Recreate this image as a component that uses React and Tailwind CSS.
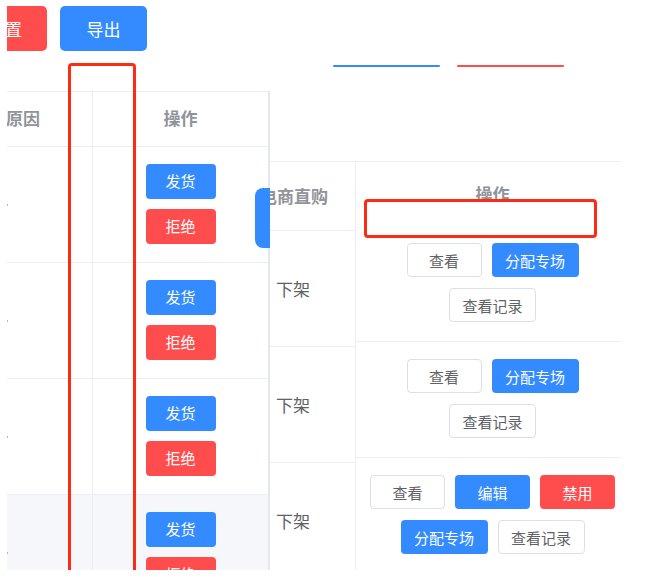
import React from "react";

const BLUE = "bg-[#338bff]";
const RED = "bg-[#ff4d4d]";

function Btn({ kind = "default", w, children }) {
  const base =
    "h-[34px] rounded-[4px] flex items-center justify-center text-[15px] leading-none shrink-0";
  const style =
    kind === "primary"
      ? `${base} bg-[#338bff] text-white`
      : kind === "danger"
      ? `${base} bg-[#ff4d4d] text-white`
      : `${base} bg-white border border-[#dcdfe6] text-[#606266]`;
  return <div className={`${style} ${w}`}>{children}</div>;
}

function LeftRow({ gray }) {
  return (
    <div className={`flex h-[116px] border-b border-[#ebeef5] shrink-0 ${gray ? "bg-[#f5f7fa]" : ""}`}>
      <div className="w-[86px] border-r border-[#ebeef5] flex items-center">
        <div className="w-[1px] h-[2px] bg-[#8fc0ff]" />
      </div>
      <div className="flex-1 flex flex-col items-center justify-center gap-[10px] pb-[2px]">
        <div className="w-[70px] h-[35px] rounded-[4px] bg-[#338bff] text-white text-[15px] flex items-center justify-center">
          发货
        </div>
        <div className="w-[70px] h-[35px] rounded-[4px] bg-[#ff4d4d] text-white text-[15px] flex items-center justify-center">
          拒绝
        </div>
      </div>
    </div>
  );
}

function RightLeftCell() {
  return (
    <div className="h-[116px] border-b border-[#ebeef5] flex items-center pl-[6px] text-[17px] text-[#606266] shrink-0">
      下架
    </div>
  );
}

function OpsRow({ children }) {
  return (
    <div className="h-[116px] border-b border-[#ebeef5] pl-[9px] pr-[13px] pb-[2px] flex flex-wrap justify-center content-center gap-x-[10px] gap-y-[11px] shrink-0">
      {children}
    </div>
  );
}

export default function App() {
  return (
    <div className="relative w-[660px] h-[584px] bg-white overflow-hidden font-['Noto_Sans_CJK_SC','Microsoft_YaHei',sans-serif]">
      {/* Left screenshot fragment */}
      <div className="absolute left-[7px] top-0 w-[263px] h-[570px] overflow-hidden bg-white flex flex-col">
        <div className="h-[91px] pt-[6px] shrink-0 flex gap-[13px] ml-[-47px]">
          <div className={`w-[87px] h-[45px] rounded-[5px] ${RED} text-white text-[17px] flex items-center justify-end pr-[25px] whitespace-nowrap`}>
            重置
          </div>
          <div className={`w-[87px] h-[45px] rounded-[5px] ${BLUE} text-white text-[17px] flex items-center justify-center`}>
            导出
          </div>
        </div>
        <div className="border-t border-[#ebeef5] border-r-2 border-r-[#e4e8ee] flex flex-col flex-1">
          <div className="flex h-[55px] border-b border-[#ebeef5] shrink-0">
            <div className="w-[86px] border-r border-[#ebeef5] flex items-center overflow-hidden pb-[3px]">
              <span className="ml-[-35px] whitespace-nowrap text-[17px] font-bold text-[#909399]">拒绝原因</span>
            </div>
            <div className="flex-1 flex items-center justify-center text-[17px] font-bold text-[#909399] pb-[3px]">
              操作
            </div>
          </div>
          <LeftRow />
          <LeftRow />
          <LeftRow />
          <LeftRow gray />
        </div>
      </div>

      {/* Peeking blue button */}
      <div className="absolute left-[255px] top-[188px] w-[15px] h-[60px] rounded-l-[8px] bg-[#338bff]" />

      {/* Right screenshot fragment */}
      <div className="absolute left-[270px] top-0 w-[351px] h-[570px] overflow-hidden bg-white flex flex-col">
        <div className="h-[161px] shrink-0 pt-[65px] pl-[63px] flex gap-[17px] items-start">
          <div className="w-[107px] h-[2px] rounded-full bg-[#338bff]" />
          <div className="w-[107px] h-[2px] rounded-full bg-[#ff4d4d]" />
        </div>
        <div className="border-t border-[#ebeef5] flex flex-1 items-start">
          <div className="w-[86px] shrink-0 border-r border-[#ebeef5] flex flex-col self-stretch">
            <div className="h-[69px] border-b border-[#ebeef5] flex items-center overflow-hidden shrink-0">
              <span className="ml-[-10px] whitespace-nowrap text-[17px] font-bold text-[#909399]">电商直购</span>
            </div>
            <RightLeftCell />
            <RightLeftCell />
            <RightLeftCell />
          </div>
          <div className="w-[277px] shrink-0 flex flex-col">
            <div className="h-[64px] flex items-center justify-center text-[17px] font-bold text-[#909399] shrink-0 pr-[4px]">
              操作
            </div>
            <OpsRow>
              <Btn w="w-[75px]">查看</Btn>
              <Btn kind="primary" w="w-[87px]">分配专场</Btn>
              <Btn w="w-[87px]">查看记录</Btn>
            </OpsRow>
            <OpsRow>
              <Btn w="w-[75px]">查看</Btn>
              <Btn kind="primary" w="w-[87px]">分配专场</Btn>
              <Btn w="w-[87px]">查看记录</Btn>
            </OpsRow>
            <OpsRow>
              <Btn w="w-[75px]">查看</Btn>
              <Btn kind="primary" w="w-[75px]">编辑</Btn>
              <Btn kind="danger" w="w-[75px]">禁用</Btn>
              <Btn kind="primary" w="w-[87px]">分配专场</Btn>
              <Btn w="w-[87px]">查看记录</Btn>
            </OpsRow>
          </div>
        </div>
      </div>

      {/* Red annotation boxes */}
      <div className="absolute left-[68px] top-[63px] w-[68px] h-[507px] border-[3px] border-b-0 border-[#ff2a12] rounded-t-[4px]" />
      <div className="absolute left-[364px] top-[199px] w-[233px] h-[39px] border-[3px] border-[#ff2a12] rounded-[4px] bg-white" />
    </div>
  );
}
